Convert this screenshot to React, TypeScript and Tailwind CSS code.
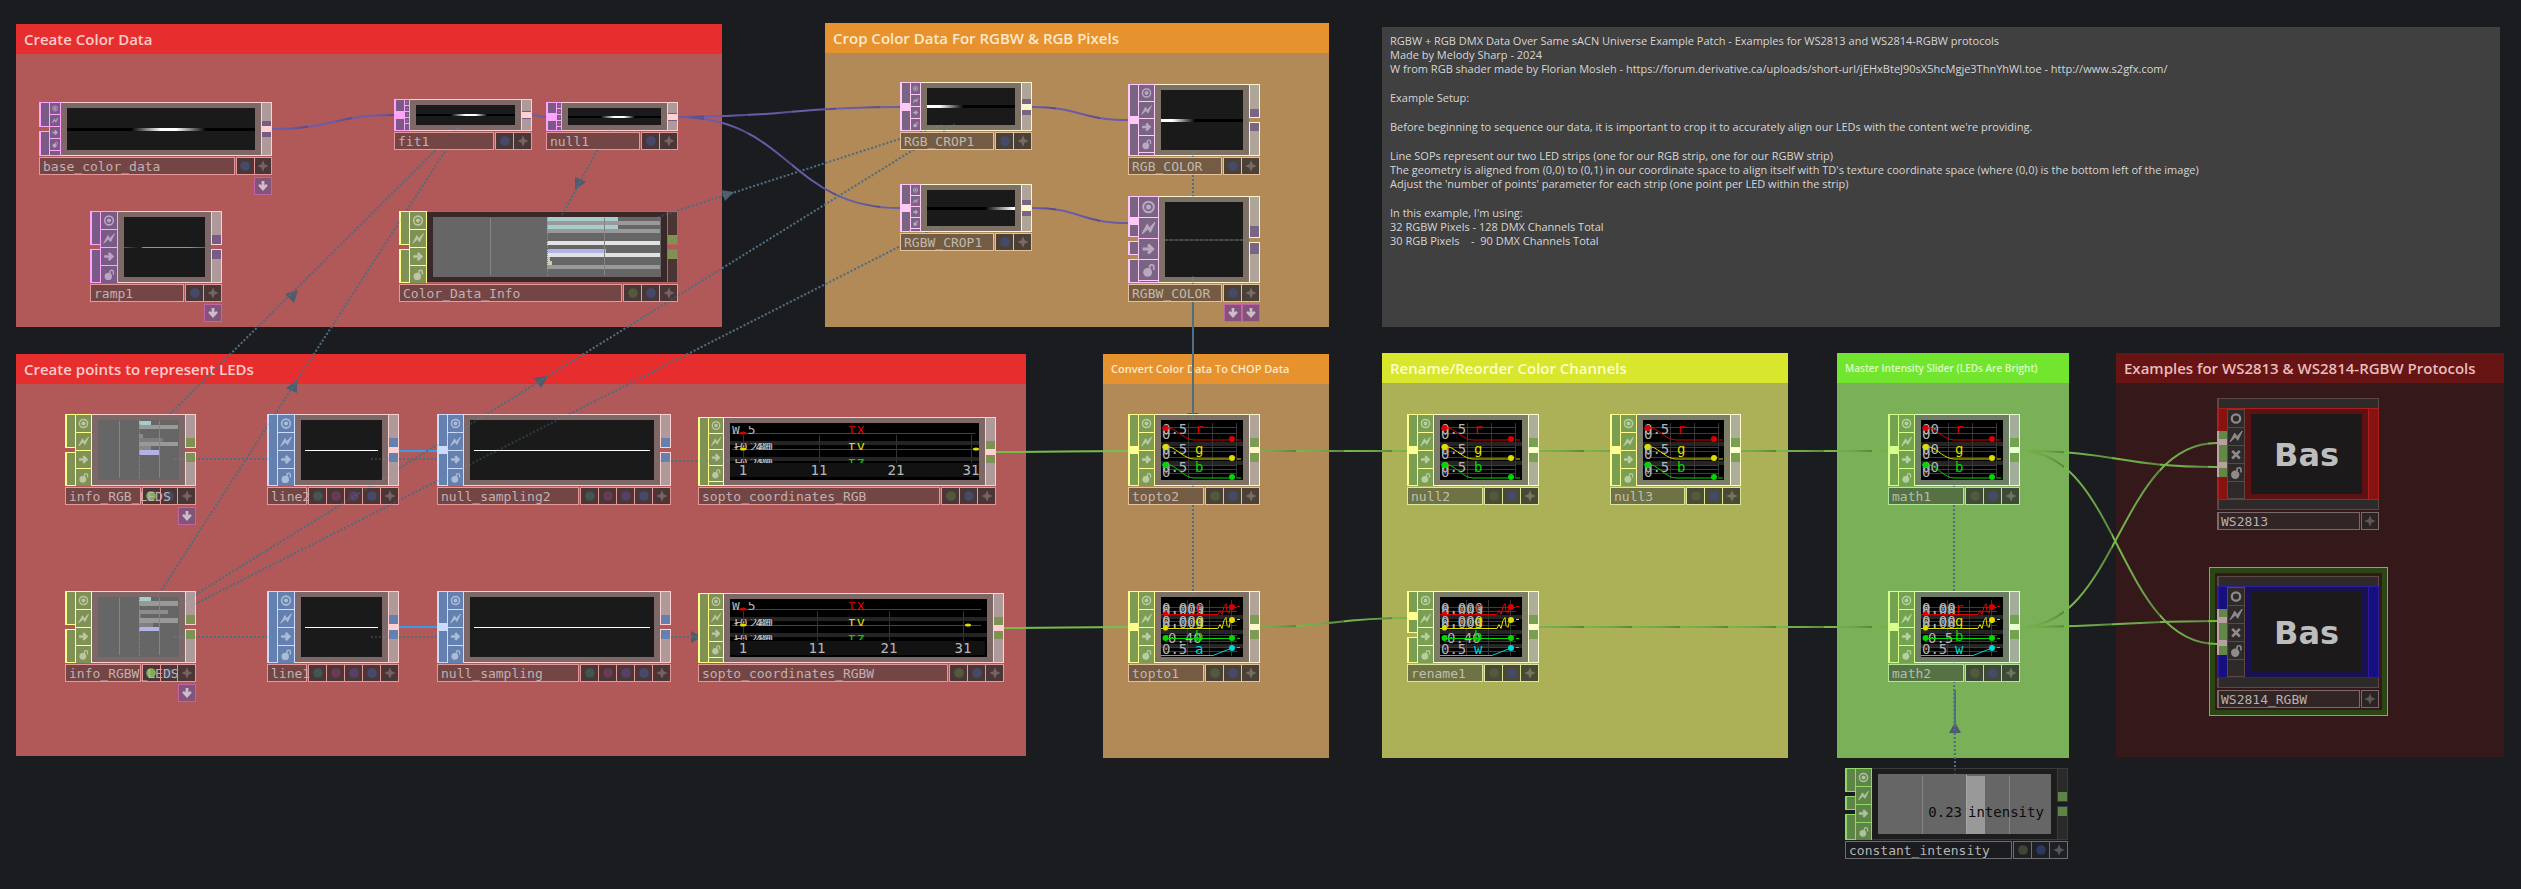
import type { ReactNode } from "react";

/* ------------------------------------------------------------------ */
/* Themes                                                              */
/* ------------------------------------------------------------------ */

type Tint = "red" | "orange" | "olive" | "green" | "none";

const tints: Record<
  Tint,
  { edge: string; frame: string; out: string; label: string; labelEdge: string; flag: string; star: string; text: string }
> = {
  red: { edge: "bg-[#ffd0d0]", frame: "bg-[#7d6767]", out: "bg-[#ae9a9a]", label: "bg-[#744545]", labelEdge: "bg-[#e69898]", flag: "bg-[#4a3636]", star: "#766262", text: "text-[#c3b0b0]" },
  orange: { edge: "bg-[#fff6cc]", frame: "bg-[#7d7166]", out: "bg-[#aea49a]", label: "bg-[#735c43]", labelEdge: "bg-[#e6c098]", flag: "bg-[#4a4036]", star: "#766c62", text: "text-[#c3b8ac]" },
  olive: { edge: "bg-[#feffd0]", frame: "bg-[#7b7d66]", out: "bg-[#acae9a]", label: "bg-[#6f7245]", labelEdge: "bg-[#dce698]", flag: "bg-[#484a36]", star: "#747662", text: "text-[#bfc0ac]" },
  green: { edge: "bg-[#e8ffd0]", frame: "bg-[#6e7d66]", out: "bg-[#a3ae9a]", label: "bg-[#567245]", labelEdge: "bg-[#b0e698]", flag: "bg-[#3e4a36]", star: "#6b7662", text: "text-[#b0c0a8]" },
  none: { edge: "bg-[#3a3b3e]", frame: "bg-[#1d1d1d]", out: "bg-[#2a2a2b]", label: "bg-[#1b1c1f]", labelEdge: "bg-[#6c6d70]", flag: "bg-[#1f2024]", star: "#55565a", text: "text-[#b4b4b6]" },
};

type Family = "topRed" | "topOrange" | "chopRed" | "chopOrange" | "chopOlive" | "chopGreen" | "chopDark" | "sop";

const families: Record<Family, { fill: string; line: string; icon: string }> = {
  topRed: { fill: "bg-[#7a5a86]", line: "bg-[#ffa4fa]", icon: "#bba4c2" },
  topOrange: { fill: "bg-[#7a6484]", line: "bg-[#ffc8f6]", icon: "#bba8c0" },
  chopRed: { fill: "bg-[#7f9253]", line: "bg-[#ffff8c]", icon: "#bcc6a2" },
  chopOrange: { fill: "bg-[#7d9c53]", line: "bg-[#ffff90]", icon: "#bacca4" },
  chopOlive: { fill: "bg-[#7a9f50]", line: "bg-[#feff90]", icon: "#b9cda2" },
  chopGreen: { fill: "bg-[#73a34f]", line: "bg-[#d6ff8c]", icon: "#b6d0a2" },
  chopDark: { fill: "bg-[#5f8546]", line: "bg-[#8ed866]", icon: "#acc29e" },
  sop: { fill: "bg-[#6480ae]", line: "bg-[#ccdaff]", icon: "#abbcd8" },
};

/* ------------------------------------------------------------------ */
/* Icons                                                               */
/* ------------------------------------------------------------------ */

function ViewerIcon({ color }: { color: string }) {
  return (
    <svg viewBox="0 0 16 16" className="h-full w-full">
      <circle cx="8" cy="8" r="5" fill="none" stroke={color} strokeWidth="1.8" />
      <circle cx="8" cy="8" r="2.4" fill={color} />
    </svg>
  );
}

function RingIcon({ color }: { color: string }) {
  return (
    <svg viewBox="0 0 16 16" className="h-full w-full">
      <circle cx="8" cy="8" r="4.2" fill="none" stroke={color} strokeWidth="2.2" />
    </svg>
  );
}

function BoltIcon({ color }: { color: string }) {
  return (
    <svg viewBox="0 0 16 16" className="h-full w-full">
      <path d="M2 13.4 L6.8 4.6 L8.8 8.2 L14.2 2.6 L9.8 11.8 L7.4 8.6 Z" fill={color} stroke={color} strokeWidth="1" />
    </svg>
  );
}

function ArrowIcon({ color }: { color: string }) {
  return (
    <svg viewBox="0 0 16 16" className="h-full w-full">
      <path d="M2.5 8 H11.6 M7.6 3.8 L11.8 8 L7.6 12.2" fill="none" stroke={color} strokeWidth="3" />
    </svg>
  );
}

function CrossIcon({ color }: { color: string }) {
  return (
    <svg viewBox="0 0 16 16" className="h-full w-full">
      <path d="M4.2 4.4 L11.8 12 M11.8 4.4 L4.2 12" stroke={color} strokeWidth="2.6" />
    </svg>
  );
}

function LockIcon({ color }: { color: string }) {
  return (
    <svg viewBox="0 0 16 16" className="h-full w-full">
      <circle cx="7.2" cy="10.2" r="4.2" fill={color} />
      <path d="M9 7 V5.2 A2 2 0 0 1 13 5.2 V8" fill="none" stroke={color} strokeWidth="1.6" />
    </svg>
  );
}

function StarIcon({ color }: { color: string }) {
  return (
    <svg viewBox="0 0 16 16" className="h-[14px] w-[14px]">
      <path d="M8 1.5 L9.9 6.1 L14.5 8 L9.9 9.9 L8 14.5 L6.1 9.9 L1.5 8 L6.1 6.1 Z" fill={color} />
    </svg>
  );
}

function DownIcon() {
  return (
    <svg viewBox="0 0 16 16" className="h-[14px] w-[14px]">
      <path d="M6.4 2.4 H9.6 V7 L11.8 5.8 L13.4 7.6 L8 13.6 L2.6 7.6 L4.2 5.8 L6.4 7 Z" fill="#cdbccb" />
    </svg>
  );
}

/* ------------------------------------------------------------------ */
/* Viewers                                                             */
/* ------------------------------------------------------------------ */

function Strip({ look }: { look: string }) {
  return (
    <div className="flex h-full items-center bg-[#1a1a1a]">
      <div className={look} />
    </div>
  );
}

const mono = "'DejaVu Sans Mono', monospace";

type Bar = [y: number, h: number, w: number, fill: string];

function BarView({ w, mid, guides, bars }: { w: number; mid: number; guides: number[]; bars: Bar[] }) {
  return (
    <svg width={w} height="59" className="block h-full w-full bg-[#666666]">
      {bars.map(([y, h, bw, fill]) => (
        <rect key={y} x={mid} y={y} width={bw} height={h} fill={fill} />
      ))}
      {guides.map((g) => (
        <rect key={g} x={g} y="1" width="1" height="57" fill="#858585" />
      ))}
      <line x1={mid + 0.5} x2={mid + 0.5} y1="0" y2="59" stroke="#8c8c8c" strokeDasharray="1 1" />
    </svg>
  );
}

const CYAN = "#a6cccc";
const GREY = "#999999";
const PALE = "#e2e2e2";
const LAV = "#b2b2e4";

const colorInfoBars: Bar[] = [
  [0, 4, 71, CYAN], [4, 4, 113, GREY], [8, 4, 71, CYAN], [12, 4, 113, GREY], [24, 4, 113, PALE],
  [32, 4, 59, LAV], [36, 4, 113, PALE], [40, 4, 3, "#ccccb2"], [44, 4, 5, "#ccccb2"], [48, 4, 113, GREY],
];
const rgbInfoBars: Bar[] = [
  [1, 4, 12, CYAN], [5, 4, 39, GREY], [14, 4, 4, "#8c8c8c"], [18, 4, 24, "#7d7d7d"],
  [22, 4, 39, GREY], [26, 4, 12, "#888888"], [30, 5, 21, LAV],
];
const rgbwInfoBars: Bar[] = [
  [0, 4, 12, CYAN], [4, 5, 39, GREY], [13, 4, 29, "#8c8c8c"], [17, 4, 2, "#808080"],
  [21, 5, 39, GREY], [26, 4, 14, "#808080"], [30, 4, 21, LAV],
];

const RED = "#dd0000";
const YEL = "#dddd00";
const GRN = "#00d800";
const CYN = "#00d8d8";

function Grid({ xs, ys, bands }: { xs: number[]; ys: number[]; bands: number[] }) {
  return (
    <g>
      {bands.map((y) => (
        <rect key={y} x="0" y={y} width="82" height="4" fill="#242424" />
      ))}
      {xs.map((x) => (
        <rect key={x} x={x} y="3" width="1" height="56" fill="#363636" />
      ))}
      {ys.map((y) => (
        <rect key={y} x="4" y={y} width="72" height="1" fill="#3c3c3c" />
      ))}
    </g>
  );
}

function RgbChart({ upper }: { upper: string }) {
  const rows = [
    { y: 8, end: 19, c: RED, n: "r", base: 14 },
    { y: 27, end: 38, c: YEL, n: "g", base: 34 },
    { y: 45, end: 57, c: GRN, n: "b", base: 52 },
  ];
  return (
    <svg className="block h-full w-full bg-black" fontFamily={mono} fontSize="14">
      <Grid xs={[27, 51, 75]} ys={[7, 13, 27, 31, 37, 45, 49, 53]} bands={[22, 41]} />
      {rows.map((r) => (
        <g key={r.n}>
          <text x="1" y={r.base} fill="#b4b4b4">{upper}</text>
          <text x="1" y={r.base + 5} fill="#b4b4b4">0</text>
          <path
            d={`M1 ${r.y} H9 C16 ${r.y + 2} 24 ${r.end + 1} 33 ${r.end + 1} H70 M76 ${r.end + 1} H80`}
            fill="none" stroke={r.c} strokeWidth="1"
          />
          <circle cx="4.5" cy={r.y} r="3" fill={r.c} />
          <circle cx="71" cy={r.end} r="3" fill={r.c} />
          <text x="34" y={r.base} fill={r.c}>{r.n}</text>
        </g>
      ))}
    </svg>
  );
}

function RgbwChart({ last, nums, low }: { last: string; nums: string[]; low: string }) {
  const rows = [
    { y: 17, dot: 10, c: RED, n: "r", base: 16 },
    { y: 31, dot: 23, c: YEL, n: "g", base: 29 },
  ];
  return (
    <svg className="block h-full w-full bg-black" fontFamily={mono} fontSize="14">
      <Grid xs={[26, 48, 70]} ys={[10, 14, 24, 28, 38, 44, 50, 54]} bands={[18, 33, 47]} />
      {rows.map((r) => (
        <g key={r.n}>
          {nums.map((t, i) => (
            <text key={t} x="1" y={r.base + i * 2} fill="#b4b4b4">{t}</text>
          ))}
          <path
            d={`M0 ${r.y + 0.5} H57 l2 -4 l2 4 l2 -8 l2 -3 l1 8 l2 2 l2 -9 M76 ${r.dot - 0.5} H79`}
            fill="none" stroke={r.c}
          />
          <circle cx="4.5" cy={r.y} r="2.6" fill={r.c} />
          <circle cx="71" cy={r.dot} r="3" fill={r.c} />
          <text x="34" y={r.base} fill={r.c}>{r.n}</text>
        </g>
      ))}
      <text x="7" y="46" fill="#b4b4b4">{low}</text>
      <path d="M2 41.5 H71 M76 41.5 H79" stroke={GRN} />
      <circle cx="4.5" cy="41" r="3" fill={GRN} />
      <circle cx="71" cy="41" r="3" fill={GRN} />
      <text x="34" y="44" fill={GRN}>b</text>
      <text x="1" y="57" fill="#b4b4b4">0.5</text>
      <path d="M0 58.5 H52 L71 51 M76 50.5 H79" fill="none" stroke={CYN} />
      <circle cx="71" cy="51" r="3" fill={CYN} />
      <text x="34" y="57" fill={CYN}>{last}</text>
    </svg>
  );
}

function CoordChart({ ticks, axis, extent }: { ticks: number[]; axis: number; extent: number }) {
  const names = ["1", "11", "21", "31"];
  const rows = [
    { y: 3, h: 8, c: RED, n: "tx", t: ["W.5"] },
    { y: 20, h: 7, c: YEL, n: "ty", t: ["-0.40", "F.280"] },
    { y: 36, h: 5, c: GRN, n: "tz", t: ["-0.40", "F.280"] },
  ];
  return (
    <svg className="block h-full w-full bg-black" fontFamily={mono} fontSize="14">
      <rect x="0" y="18" width="100%" height="4" fill="#242424" />
      <rect x="0" y="34" width="100%" height="4" fill="#242424" />
      <rect x="2" y="10" width={extent} height="1" fill="#444444" />
      <rect x="2" y="26" width={extent} height="1" fill="#444444" />
      {ticks.map((x) => (
        <rect key={x} x={x} y="12" width="1" height="30" fill="#333333" />
      ))}
      {rows.map((r) => (
        <svg key={r.n} x="0" y={r.y} width={extent} height={r.h} overflow="hidden">
          {r.t.map((t, i) => (
            <text key={t} x={i === 0 ? 2 : 4} y="8" fill="#b4b4b4" fontSize="13">{t}</text>
          ))}
          <text x="118" y="8" fill={r.c}>{r.n}</text>
        </svg>
      ))}
      <ellipse cx="13" cy="10" rx="3" ry="1.5" fill={RED} />
      <ellipse cx="13" cy="26" rx="3" ry="1.5" fill={YEL} />
      <ellipse cx={ticks[3] + 5} cy="26" rx="3" ry="1.5" fill={YEL} />
      <rect x="0" y={axis} width={extent + 6} height="14" fill="#121212" />
      {ticks.map((x, i) => (
        <text key={x} x={x} y={axis + 12} fill="#b8b8b8" fontSize="14" textAnchor="middle">{names[i]}</text>
      ))}
    </svg>
  );
}

function LineView() {
  return (
    <div className="flex h-full items-center bg-[#1a1a1a] px-1 pt-px">
      <div className="h-px w-full bg-white" />
    </div>
  );
}

function IntensityView() {
  return (
    <svg className="block h-full w-full bg-[#666666]" fontFamily={mono} fontSize="14">
      <rect x="88" y="2" width="19" height="60" fill="#999999" />
      <rect x="44" y="2" width="1" height="60" fill="#858585" />
      <rect x="131" y="2" width="1" height="60" fill="#858585" />
      <line x1="88.5" x2="88.5" y1="1" y2="62" stroke="#b4b4b4" strokeDasharray="1 1" />
      <text x="84" y="43" textAnchor="end" fill="#0c0c0c">0.23</text>
      <text x="90" y="43" fill="#0c0c0c">intensity</text>
    </svg>
  );
}

/* ------------------------------------------------------------------ */
/* Operator node                                                       */
/* ------------------------------------------------------------------ */

type Seg = "gap" | "wire" | number;

type Op = {
  name: string;
  x: number;
  y: number;
  w: number;
  h: number;
  family: Family;
  tint: Tint;
  input: Seg[];
  flagW: number;
  cell: number;
  port: number;
  out: boolean;
  labelW: number;
  flags: string[];
  down?: number;
  dark?: boolean;
  view: ReactNode;
};

const IN: Seg[] = [1, "wire", 1];
const OPEN: Seg[] = [1, "gap", 1];
const SOLID: Seg[] = [1];

const glow = "h-[3px] w-full bg-[linear-gradient(90deg,#000_34%,#fff_50%,#fff_58%,#000_74%)]";
const glowSmall = "h-[2px] w-full bg-[linear-gradient(90deg,#000_35%,#fff_50%,#fff_60%,#000_72%)]";
const leftGlow = "h-[3px] w-full bg-[linear-gradient(90deg,#fff_14%,#000_42%)]";
const rightGlow = "h-[3px] w-full bg-[linear-gradient(90deg,#000_66%,#fff_98%)]";
const greenRamp = "h-px w-full bg-[linear-gradient(90deg,#1f8a0a_0%,#051c00_20%,#2be800_24%,#2be800_80%,#1f8a0a_100%)]";
const greyDashes = "h-[2px] w-full bg-[repeating-linear-gradient(90deg,#4a4a4a_0px,#4a4a4a_3px,#353535_3px,#353535_5px)]";

const GB = ["#525a3c", "#464a6a"];
const B = ["#464a6a"];
const SOPF = ["#44544f", "#683c55", "#564066", "#464a6a"];

const ops: Op[] = [
  { name: "base_color_data", x: 39, y: 102, w: 233, h: 54, family: "topRed", tint: "red", input: OPEN, flagW: 12, cell: 11, port: 5, out: true, labelW: 196, flags: B, down: 1, view: <Strip look={glow} /> },
  { name: "ramp1", x: 90, y: 211, w: 132, h: 72, family: "topRed", tint: "red", input: OPEN, flagW: 18, cell: 17, port: 9, out: false, labelW: 94, flags: B, down: 1, view: <Strip look={greenRamp} /> },
  { name: "fit1", x: 394, y: 99, w: 138, h: 32, family: "topRed", tint: "red", input: IN, flagW: 6, cell: 5, port: 1, out: true, labelW: 100, flags: B, view: <Strip look={glowSmall} /> },
  { name: "null1", x: 546, y: 102, w: 132, h: 29, family: "topRed", tint: "red", input: IN, flagW: 6, cell: 5, port: 1, out: true, labelW: 94, flags: B, view: <Strip look={glowSmall} /> },
  { name: "Color_Data_Info", x: 399, y: 211, w: 279, h: 72, family: "chopRed", tint: "red", input: OPEN, flagW: 18, cell: 17, port: 9, out: false, labelW: 223, flags: GB, dark: true, view: <BarView w={228} mid={114} guides={[57, 171]} bars={colorInfoBars} /> },
  { name: "RGB_CROP1", x: 900, y: 82, w: 132, h: 49, family: "topOrange", tint: "orange", input: IN, flagW: 11, cell: 11, port: 5, out: true, labelW: 94, flags: B, view: <Strip look={leftGlow} /> },
  { name: "RGBW_CROP1", x: 900, y: 184, w: 132, h: 48, family: "topOrange", tint: "orange", input: IN, flagW: 11, cell: 10, port: 5, out: true, labelW: 94, flags: B, view: <Strip look={rightGlow} /> },
  { name: "RGB_COLOR", x: 1128, y: 84, w: 132, h: 72, family: "topOrange", tint: "orange", input: IN, flagW: 17, cell: 16, port: 8, out: false, labelW: 94, flags: B, view: <Strip look={leftGlow} /> },
  { name: "RGBW_COLOR", x: 1128, y: 196, w: 132, h: 87, family: "topOrange", tint: "orange", input: [22, "wire", 12, "gap", 14, "gap", 24], flagW: 21, cell: 20, port: 11, out: false, labelW: 94, flags: B, down: 2, view: <Strip look={greyDashes} /> },
  { name: "info_RGB_LEDS", x: 65, y: 414, w: 131, h: 72, family: "chopRed", tint: "red", input: OPEN, flagW: 17, cell: 17, port: 9, out: false, labelW: 76, flags: ["#7fae50", "#464a6a"], down: 1, view: <BarView w={81} mid={41} guides={[21, 61]} bars={rgbInfoBars} /> },
  { name: "info_RGBW_LEDS", x: 65, y: 591, w: 131, h: 72, family: "chopRed", tint: "red", input: OPEN, flagW: 17, cell: 17, port: 9, out: false, labelW: 76, flags: ["#7fae50", "#464a6a"], down: 1, view: <BarView w={81} mid={41} guides={[21, 61]} bars={rgbwInfoBars} /> },
  { name: "line2", x: 267, y: 414, w: 132, h: 72, family: "sop", tint: "red", input: SOLID, flagW: 18, cell: 17, port: 9, out: true, labelW: 40, flags: SOPF, view: <LineView /> },
  { name: "line1", x: 267, y: 591, w: 132, h: 72, family: "sop", tint: "red", input: SOLID, flagW: 18, cell: 17, port: 9, out: true, labelW: 40, flags: SOPF, view: <LineView /> },
  { name: "null_sampling2", x: 437, y: 414, w: 234, h: 72, family: "sop", tint: "red", input: IN, flagW: 17, cell: 17, port: 9, out: false, labelW: 142, flags: SOPF, view: <LineView /> },
  { name: "null_sampling", x: 437, y: 591, w: 234, h: 72, family: "sop", tint: "red", input: IN, flagW: 17, cell: 17, port: 9, out: false, labelW: 142, flags: SOPF, view: <LineView /> },
  { name: "sopto_coordinates_RGB", x: 698, y: 417, w: 298, h: 69, family: "chopRed", tint: "red", input: SOLID, flagW: 16, cell: 15, port: 8, out: true, labelW: 242, flags: GB, view: <CoordChart ticks={[13, 89, 166, 241]} axis={40} extent={243} /> },
  { name: "sopto_coordinates_RGBW", x: 698, y: 593, w: 306, h: 70, family: "chopRed", tint: "red", input: SOLID, flagW: 16, cell: 15, port: 8, out: true, labelW: 250, flags: GB, view: <CoordChart ticks={[13, 87, 159, 233]} axis={42} extent={249} /> },
  { name: "topto2", x: 1128, y: 414, w: 132, h: 72, family: "chopOrange", tint: "orange", input: IN, flagW: 17, cell: 17, port: 9, out: true, labelW: 76, flags: GB, view: <RgbChart upper="0.5" /> },
  { name: "topto1", x: 1128, y: 591, w: 132, h: 72, family: "chopOrange", tint: "orange", input: IN, flagW: 17, cell: 17, port: 9, out: true, labelW: 76, flags: GB, view: <RgbwChart last="a" nums={["0.000", "8.003"]} low="0.40" /> },
  { name: "null2", x: 1407, y: 414, w: 132, h: 72, family: "chopOlive", tint: "olive", input: IN, flagW: 17, cell: 17, port: 9, out: true, labelW: 76, flags: GB, view: <RgbChart upper="0.5" /> },
  { name: "null3", x: 1610, y: 414, w: 131, h: 72, family: "chopOlive", tint: "olive", input: IN, flagW: 17, cell: 17, port: 9, out: true, labelW: 75, flags: GB, view: <RgbChart upper="0.5" /> },
  { name: "rename1", x: 1407, y: 591, w: 132, h: 72, family: "chopOlive", tint: "olive", input: [23, "wire", 13, "gap", 27], flagW: 17, cell: 17, port: 9, out: true, labelW: 76, flags: GB, view: <RgbwChart last="w" nums={["0.000", "8.003"]} low="0.40" /> },
  { name: "math1", x: 1888, y: 414, w: 132, h: 72, family: "chopGreen", tint: "green", input: IN, flagW: 17, cell: 17, port: 9, out: true, labelW: 76, flags: GB, view: <RgbChart upper="00" /> },
  { name: "math2", x: 1888, y: 591, w: 132, h: 72, family: "chopGreen", tint: "green", input: IN, flagW: 17, cell: 17, port: 9, out: true, labelW: 76, flags: GB, view: <RgbwChart last="w" nums={["0.00", "8.08"]} low="0.5" /> },
  { name: "constant_intensity", x: 1845, y: 768, w: 223, h: 72, family: "chopDark", tint: "none", input: [24, "gap", 13, "gap", 27], flagW: 17, cell: 17, port: 9, out: false, labelW: 167, flags: ["#3c4630", "#2c3860"], view: <IntensityView /> },
];

function InputColumn({ segs, fill, line }: { segs: Seg[]; fill: string; line: string }) {
  return (
    <div className="flex w-[10px] flex-none flex-col">
      {segs.map((s, i) => {
        if (s === "gap") return <div key={i} className="h-1 flex-none" />;
        if (s === "wire") return <div key={i} className={`h-[6px] flex-none ${line}`} />;
        return (
          <div key={i} className={`flex basis-0 py-px pl-[2px] ${line}`} style={{ flexGrow: s }}>
            <div className={`flex-1 ${fill}`} />
          </div>
        );
      })}
    </div>
  );
}

function OutputColumn({ op, fill }: { op: Op; fill: string }) {
  const t = tints[op.tint];
  const edge = op.dark ? "bg-[#b26464]" : t.edge;
  const body = op.dark ? "bg-[#4a3434]" : t.out;
  const half = (first: boolean) => (
    <div className={`flex flex-1 basis-0 ${first ? "flex-col pt-px" : "flex-col-reverse pb-px"} px-px ${edge} ${op.out ? "" : "py-px"}`}>
      <div className={`flex-1 ${body}`} />
      <div className={`flex-none ${fill}`} style={{ height: op.port }} />
    </div>
  );
  return (
    <div className="flex w-[11px] flex-none flex-col">
      {half(true)}
      <div className={`flex-none ${op.out ? `h-[6px] ${edge}` : "h-1"}`} />
      {half(false)}
    </div>
  );
}

function Operator({ op }: { op: Op }) {
  const f = families[op.family];
  const t = tints[op.tint];
  const edge = op.dark ? "bg-[#b26464]" : t.edge;
  const frame = op.dark ? "bg-[#3a2727]" : t.frame;
  const icons = [ViewerIcon, BoltIcon, ArrowIcon, LockIcon];
  const names = ["Viewer", "Bypass", "Display", "Lock"];
  return (
    <div className="absolute flex flex-col gap-px" style={{ left: op.x, top: op.y, width: op.w }}>
      <div className="flex" style={{ height: op.h }}>
        <InputColumn segs={op.input} fill={f.fill} line={f.line} />
        <div className={`flex flex-none flex-col gap-px overflow-hidden p-px ${f.line}`} style={{ width: op.flagW }}>
          {icons.map((Icon, i) => (
            <button key={names[i]} aria-label={names[i]} className={`block flex-none p-px ${f.fill}`} style={{ height: op.cell }}>
              <Icon color={f.icon} />
            </button>
          ))}
          <div className={`flex-1 ${f.fill}`} />
        </div>
        <div className={`flex-1 py-px ${edge}`}>
          <div className={`h-full px-[6px] py-[5px] ${frame}`}>{op.view}</div>
        </div>
        <OutputColumn op={op} fill={f.fill} />
      </div>
      <div className="flex h-[18px] gap-px">
        <div className={`relative z-10 flex-none p-px ${t.labelEdge}`} style={{ width: op.labelW }}>
          <div className={`flex h-full items-center whitespace-nowrap pl-[3px] pt-[2px] font-['DejaVu_Sans_Mono',monospace] text-[13px] leading-4 ${t.label} ${t.text}`}>
            {op.name}
          </div>
        </div>
        <div className={`flex flex-1 gap-px p-px ${t.labelEdge}`}>
          {op.flags.map((c) => (
            <button key={c} aria-label="Flag" className={`flex flex-1 items-center justify-center ${t.flag}`}>
              <svg viewBox="0 0 10 10" className="h-[10px] w-[10px]">
                <circle cx="5" cy="5" r="4.8" fill={c} />
              </svg>
            </button>
          ))}
          <button aria-label="Activate" className={`flex flex-1 items-center justify-center ${t.flag}`}>
            <StarIcon color={t.star} />
          </button>
        </div>
      </div>
      {op.down && (
        <div className="flex justify-end pt-px">
          {Array.from({ length: op.down }, (_, i) => (
            <button key={i} aria-label="Docked operators" className="flex h-[18px] w-[18px] items-center justify-center border border-[#c263a8] bg-[#83547a]">
              <DownIcon />
            </button>
          ))}
        </div>
      )}
    </div>
  );
}

/* ------------------------------------------------------------------ */
/* Component (base) node                                               */
/* ------------------------------------------------------------------ */

function BaseNode({ name, x, y, edge, side, frame }: { name: string; x: number; y: number; edge: string; side: string; frame: string }) {
  const icons = [RingIcon, BoltIcon, CrossIcon, LockIcon];
  const names = ["Viewer", "Bypass", "Cook", "Lock"];
  return (
    <div className="absolute flex w-[162px] flex-col gap-[2px]" style={{ left: x, top: y }}>
      <div className="flex h-[112px] flex-col border border-l-2 border-[#5c4747] bg-[#2f2a2a]">
        <div className="h-[9px]" />
        <div className={`-ml-[2px] -mr-px flex flex-1 border-y ${edge}`}>
          <div className="flex w-[10px] flex-none flex-col">
            <div className={`h-[22px] border-l-2 ${edge} ${side}`} />
            <div className="flex h-[46px] flex-col border-l-2 border-[#b8a4a4] bg-[#638746]">
              <div className="h-2" />
              <div className="h-[6px] bg-[#b8a0a0]" />
              <div className="h-[17px]" />
              <div className="h-[6px] bg-[#b8a0a0]" />
            </div>
            <div className={`flex-1 border-l-2 ${edge} ${side}`} />
          </div>
          <div className="flex w-[18px] flex-none flex-col gap-px border border-[#5c4747] bg-[#5c4747]">
            {icons.map((Icon, i) => (
              <button key={names[i]} aria-label={names[i]} className="block h-[17px] flex-none bg-[#2f2a2a]">
                <Icon color="#8f8b8b" />
              </button>
            ))}
            <div className="flex-1 bg-[#2f2a2a]" />
          </div>
          <div className={`flex flex-1 px-[6px] py-[5px] ${frame}`}>
            <div className="flex flex-1 items-center justify-center bg-[#1b1919] pt-[2px] font-['DejaVu_Sans',sans-serif] text-[32px] font-bold text-[#bdbdbd]">
              Bas
            </div>
          </div>
          <div className={`w-[11px] flex-none border-x ${edge} ${side}`} />
        </div>
        <div className="h-[9px]" />
      </div>
      <div className="flex h-[18px] gap-px">
        <div className="flex flex-1 items-center border border-l-2 border-[#7c6a6a] bg-[#322525] pl-[2px] pt-[2px] font-['DejaVu_Sans_Mono',monospace] text-[13px] leading-4 text-[#b8b0b0]">
          {name}
        </div>
        <button aria-label="Activate" className="flex w-[18px] items-center justify-center border border-[#7c6a6a] bg-[#2b2424]">
          <StarIcon color="#5f5757" />
        </button>
      </div>
    </div>
  );
}

/* ------------------------------------------------------------------ */
/* Annotation boxes                                                    */
/* ------------------------------------------------------------------ */

const boxes = [
  { title: "Create Color Data", x: 16, y: 24, w: 706, h: 303, head: "bg-[#e62e2e] text-[#ffcaca] text-[15px]", body: "bg-[#b15858]" },
  { title: "Crop Color Data For RGBW & RGB Pixels", x: 825, y: 23, w: 504, h: 304, head: "bg-[#e6922e] text-[#ffe9ca] text-[15px]", body: "bg-[#b18a58]" },
  { title: "Create points to represent LEDs", x: 16, y: 354, w: 1010, h: 402, head: "bg-[#e62e2e] text-[#ffcaca] text-[15px]", body: "bg-[#b15858]" },
  { title: "Convert Color Data To CHOP Data", x: 1103, y: 354, w: 226, h: 404, head: "bg-[#e6922e] text-[#ffe9ca] text-[11px]", body: "bg-[#b18a58]" },
  { title: "Rename/Reorder Color Channels", x: 1382, y: 353, w: 406, h: 405, head: "bg-[#d8e62e] text-[#fbffca] text-[15px]", body: "bg-[#acb158]" },
  { title: "Master Intensity Slider (LEDs Are Bright)", x: 1837, y: 353, w: 232, h: 405, head: "bg-[#72e62e] text-[#deffca] text-[10px]", body: "bg-[#7ab158]" },
  { title: "Examples for WS2813 & WS2814-RGBW Protocols", x: 2116, y: 353, w: 388, h: 404, head: "bg-[#661414] text-[#e8bcbc] text-[15px]", body: "bg-[#35181a]" },
];

const notes = [
  [
    "RGBW + RGB DMX Data Over Same sACN Universe Example Patch - Examples for WS2813 and WS2814-RGBW protocols",
    "Made by Melody Sharp - 2024",
    "W from RGB shader made by Florian Mosleh - https://forum.derivative.ca/uploads/short-url/jEHxBteJ90sX5hcMgje3ThnYhWl.toe - http://www.s2gfx.com/",
  ],
  ["Example Setup:"],
  ["Before beginning to sequence our data, it is important to crop it to accurately align our LEDs with the content we're providing."],
  [
    "Line SOPs represent our two LED strips (one for our RGB strip, one for our RGBW strip)",
    "The geometry is aligned from (0,0) to (0,1) in our coordinate space to align itself with TD's texture coordinate space (where (0,0) is the bottom left of the image)",
    "Adjust the 'number of points' parameter for each strip (one point per LED within the strip)",
  ],
  ["In this example, I'm using:", "32 RGBW Pixels - 128 DMX Channels Total", "30 RGB Pixels    -  90 DMX Channels Total"],
];

/* ------------------------------------------------------------------ */
/* Connections                                                         */
/* ------------------------------------------------------------------ */

type Wire = [x1: number, y1: number, x2: number, y2: number, paint: string];

const wires: Wire[] = [
  [272, 129, 394, 115, "url(#wirePurple)"],
  [532, 115, 546, 117, "url(#wirePurple)"],
  [678, 117, 900, 107, "url(#wirePurple)"],
  [678, 117, 900, 208, "url(#wirePurple)"],
  [1032, 107, 1128, 120, "url(#wirePurple)"],
  [1032, 208, 1128, 223, "url(#wirePurple)"],
  [399, 451, 437, 451, "#3c9ae8"],
  [399, 627, 437, 627, "#3c9ae8"],
  [996, 452, 1128, 451, "#78bd4c"],
  [1004, 628, 1128, 627, "#78bd4c"],
  [1260, 451, 1407, 451, "url(#wireGreen)"],
  [1260, 627, 1407, 618, "url(#wireGreen)"],
  [1539, 451, 1610, 451, "url(#wireGreen)"],
  [1741, 451, 1888, 451, "url(#wireGreen)"],
  [1539, 627, 1888, 627, "url(#wireGreen)"],
  [2020, 451, 2217, 467, "url(#wireGreen)"],
  [2020, 451, 2217, 644, "url(#wireGreen)"],
  [2020, 627, 2217, 443, "url(#wireGreen)"],
  [2020, 627, 2217, 621, "url(#wireGreen)"],
];

function Wires() {
  return (
    <svg className="pointer-events-none absolute inset-0 h-full w-full">
      <defs>
        <linearGradient id="wirePurple" gradientUnits="userSpaceOnUse" x1="0" y1="0" x2="44" y2="0" spreadMethod="repeat">
          <stop offset="0" stopColor="#6c5eac" />
          <stop offset=".6" stopColor="#685aa6" />
          <stop offset="1" stopColor="#574a86" />
        </linearGradient>
        <linearGradient id="wireGreen" gradientUnits="userSpaceOnUse" x1="0" y1="0" x2="48" y2="0" spreadMethod="repeat">
          <stop offset="0" stopColor="#78b84c" />
          <stop offset=".6" stopColor="#6ca648" />
          <stop offset="1" stopColor="#5a8640" />
        </linearGradient>
      </defs>
      {wires.map(([x1, y1, x2, y2, paint], i) => {
        const mid = (x1 + x2) / 2;
        return y1 === y2 ? (
          <rect key={i} x={x1} y={y1 - 1} width={x2 - x1} height="2" fill={paint} />
        ) : (
          <path key={i} d={`M${x1} ${y1} C${mid} ${y1} ${mid} ${y2} ${x2} ${y2}`} fill="none" stroke={paint} strokeWidth="2" />
        );
      })}
    </svg>
  );
}

type Link = [x1: number, y1: number, x2: number, y2: number];

const links: Link[] = [
  [458, 128, 166, 418],
  [460, 128, 157, 597],
  [609, 129, 561, 217],
  [658, 217, 943, 125],
  [955, 124, 182, 603],
  [938, 227, 183, 610],
  [174, 459, 277, 459],
  [371, 459, 446, 459],
  [655, 461, 730, 461],
  [174, 637, 277, 637],
  [371, 637, 446, 637],
  [655, 637, 698, 637],
  [1193, 151, 1193, 202],
  [1193, 481, 1193, 597],
  [1954, 481, 1954, 597],
  [1954, 657, 1955, 774],
];

const arrows = ["298,290 294,303 285,294", "286,388 297,380 297,393", "575,177 586,182 575,190", "721,190 734,192 725,201", "534,378 548,376 541,388", "691,631 691,643 702,637", "1187,413 1199,413 1193,420", "1949,733 1961,733 1955,722"];

function Links({ faint }: { faint: boolean }) {
  const color = faint ? "#5aa0b8" : "#4d5d6c";
  return (
    <svg className={`pointer-events-none absolute inset-0 h-full w-full ${faint ? "opacity-25" : ""}`}>
      {links.map(([x1, y1, x2, y2], i) => (
        <line key={i} x1={x1} y1={y1} x2={x2} y2={y2} stroke={color} strokeWidth="2" strokeDasharray="2 2" />
      ))}
      <rect x="1192" y="276" width="2" height="144" fill={color} />
      <rect x="1954" y="690" width="2" height="37" fill={color} />
      {!faint && arrows.map((p) => <polygon key={p} points={p} fill={color} />)}
    </svg>
  );
}

/* ------------------------------------------------------------------ */

export default function App() {
  return (
    <main className="relative min-h-screen w-full overflow-hidden bg-[#1b1c20]">
      {boxes.map((b) => (
        <section key={b.title} className={`absolute ${b.body}`} style={{ left: b.x, top: b.y, width: b.w, height: b.h }}>
          <h2 className={`flex h-[30px] items-center whitespace-nowrap px-2 font-['Open_Sans',sans-serif] font-semibold ${b.head}`}>{b.title}</h2>
        </section>
      ))}
      <article className="absolute left-[1382px] top-[27px] flex h-[300px] w-[1118px] flex-col gap-[15px] bg-[#404040] px-2 py-[7px] font-['Open_Sans',sans-serif] text-[11px] leading-[14px] text-[#d6d6d6]">
        {notes.map((lines) => (
          <div key={lines[0]}>
            {lines.map((l) => (
              <p key={l} className="whitespace-pre">{l}</p>
            ))}
          </div>
        ))}
      </article>
      <Wires />
      <Links faint={false} />
      <div className="pointer-events-none absolute left-[2209px] top-[567px] h-[149px] w-[179px] border border-[#00ff00]">
        <div className="h-full w-full border-[5px] border-[#00ff0033]" />
      </div>
      {ops.map((op) => (
        <Operator key={op.name} op={op} />
      ))}
      <BaseNode name="WS2813" x={2217} y={398} edge="border-[#ad1f1f]" side="bg-[#871212]" frame="bg-[#5c1212]" />
      <BaseNode name="WS2814_RGBW" x={2217} y={576} edge="border-[#2d1c9c]" side="bg-[#15107e]" frame="bg-[#18124f]" />
      <Links faint />
    </main>
  );
}
